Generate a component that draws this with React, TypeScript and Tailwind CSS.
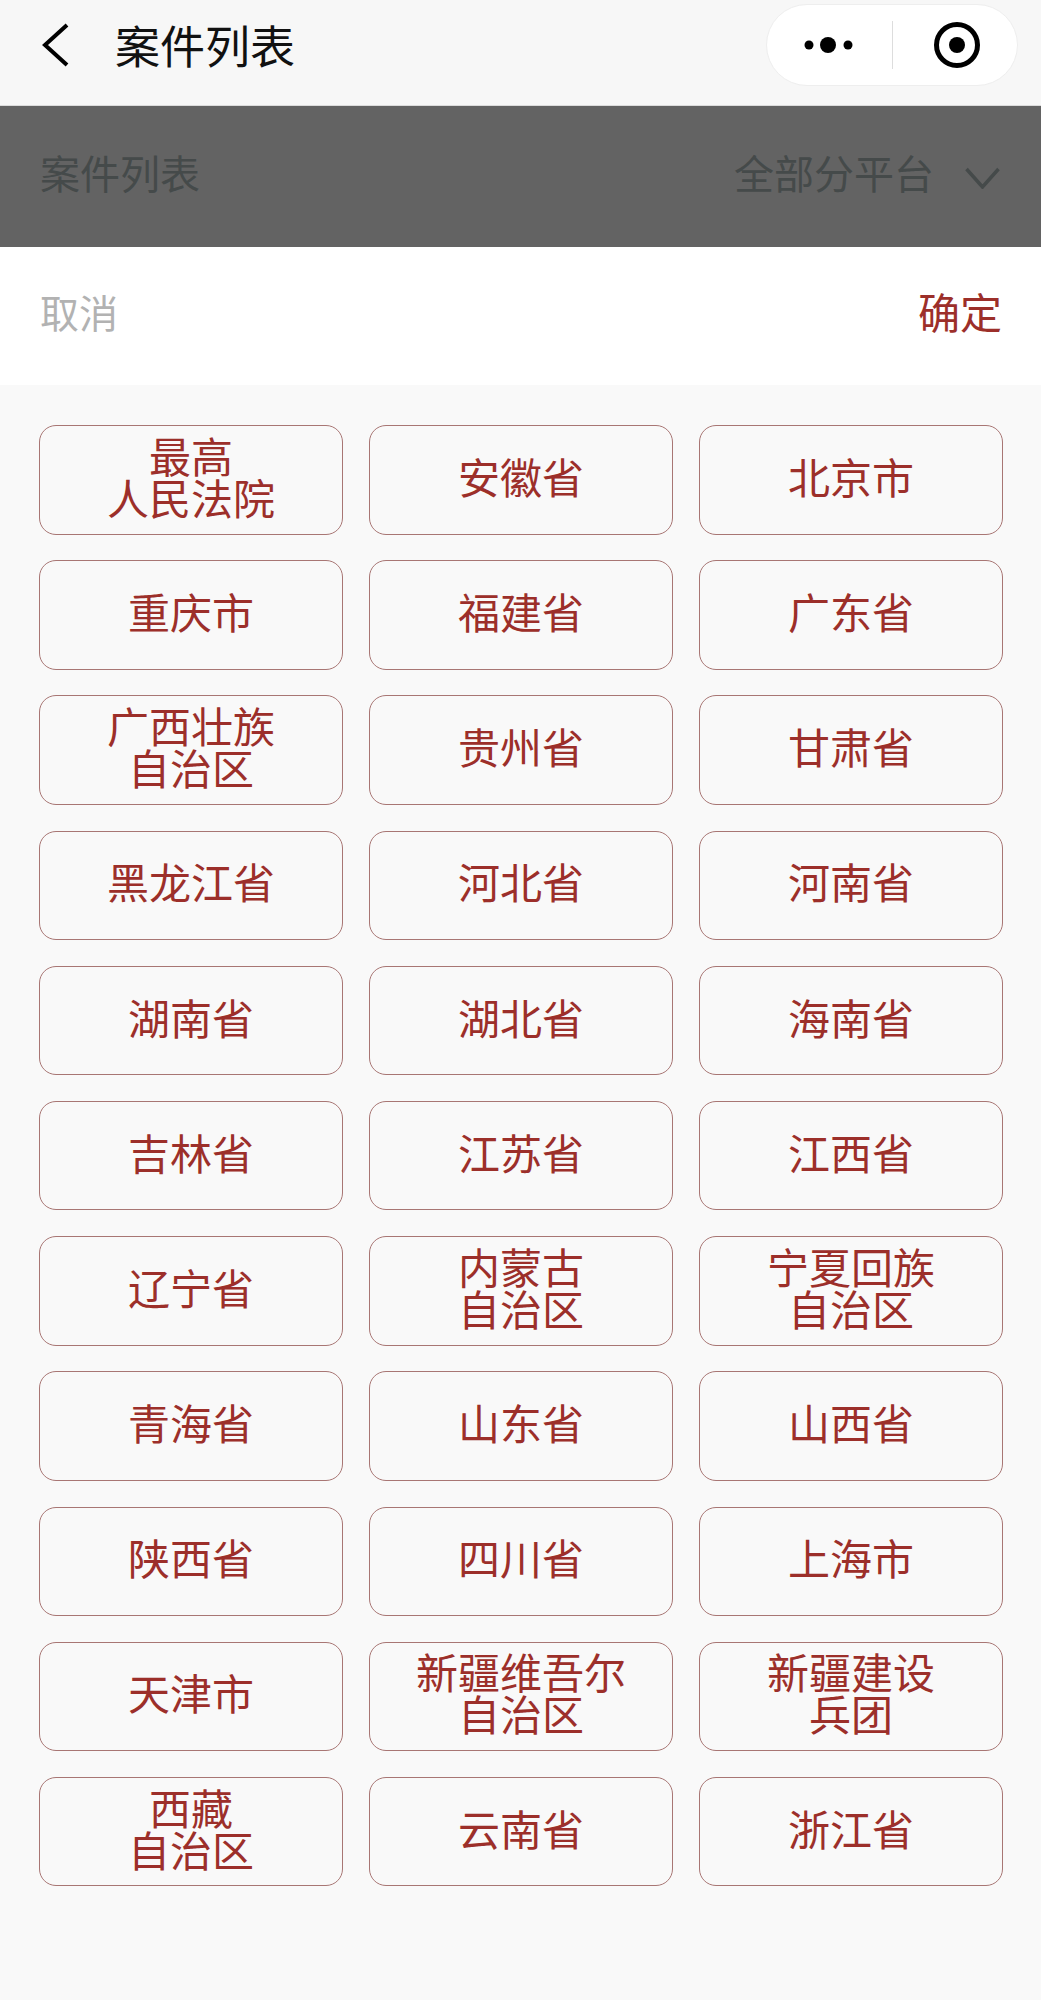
const CJK = "font-['Noto_Sans_CJK_SC','Noto_Sans',sans-serif]";

// regions in the order shown; "\n" marks the forced line break in a button
const REGIONS = [
  "最高\n人民法院", "安徽省", "北京市",
  "重庆市", "福建省", "广东省",
  "广西壮族\n自治区", "贵州省", "甘肃省",
  "黑龙江省", "河北省", "河南省",
  "湖南省", "湖北省", "海南省",
  "吉林省", "江苏省", "江西省",
  "辽宁省", "内蒙古\n自治区", "宁夏回族\n自治区",
  "青海省", "山东省", "山西省",
  "陕西省", "四川省", "上海市",
  "天津市", "新疆维吾尔\n自治区", "新疆建设\n兵团",
  "西藏\n自治区", "云南省", "浙江省",
];

function TitleBar() {
  return (
    <div className="flex h-[106px] items-start justify-between border-b border-[#dcdcdc] bg-[#f7f7f7] pl-[42px] pr-[23px] pt-1">
      <div className="flex h-[82px] items-center gap-[46px]">
        <svg width="27" height="44" viewBox="0 0 27 44" fill="none">
          <path d="M25 2 L3 22 L25 42" stroke="#000" strokeWidth="4" />
        </svg>
        <span className="pb-[2px] text-[45px] leading-none text-[#111]">案件列表</span>
      </div>
      <div className="flex h-[82px] w-[252px] items-center rounded-full border border-[#eeeeee] bg-white">
        <div className="flex w-[125px] items-center justify-end pr-[26px]">
          <svg width="62" height="18" viewBox="0 0 62 18">
            <circle cx="5" cy="9" r="4.5" fill="#000" />
            <circle cx="24" cy="9" r="8" fill="#000" />
            <circle cx="44" cy="9" r="4.5" fill="#000" />
          </svg>
        </div>
        <div className="h-12 w-px bg-[#dddddd]" />
        <div className="flex flex-1 items-center justify-center pl-1">
          <svg width="48" height="48" viewBox="0 0 48 48">
            <circle cx="24" cy="24" r="20.5" fill="none" stroke="#000" strokeWidth="5" />
            <circle cx="24" cy="24" r="8" fill="#000" />
          </svg>
        </div>
      </div>
    </div>
  );
}

function DimmedBar() {
  return (
    <div className="flex h-[141px] items-center justify-between bg-[#636363] pl-10 pr-[41px] text-[40px] leading-none text-[#454a4a]">
      <span className="pb-[10px]">案件列表</span>
      <div className="flex items-center gap-[31px]">
        <span className="pb-[10px]">全部分平台</span>
        <svg width="35" height="22" viewBox="0 0 35 22" fill="none" className="mt-[2px]">
          <path d="M1.5 2 L17.5 20 L33.5 2" stroke="#454a4a" strokeWidth="3.5" />
        </svg>
      </div>
    </div>
  );
}

function PickerActions() {
  return (
    <div className="flex h-[138px] items-center justify-between bg-white pl-10 pr-[39px]">
      <span className="pb-[10px] text-[39px] leading-none text-[#b2b2b2]">取消</span>
      <span className="pb-[10px] text-[42px] leading-none text-[#9c2f2a]">确定</span>
    </div>
  );
}

function RegionButton({ label }: { label: string }) {
  return (
    <button className="flex h-[109.5px] items-center justify-center whitespace-pre-line rounded-[17px] border border-[#a87674] pb-[8px] text-[42px] leading-[42px] text-[#9c2f2a]">
      {label}
    </button>
  );
}

export default function App() {
  return (
    <div className={`${CJK} h-[2000px] w-[1041px] overflow-hidden bg-[#f9f9f9]`}>
      <TitleBar />
      <DimmedBar />
      <PickerActions />
      <div className="grid grid-cols-3 gap-x-[26px] gap-y-[25.7px] pl-[39px] pr-[38px] pt-10">
        {REGIONS.map((r) => (
          <RegionButton key={r} label={r} />
        ))}
      </div>
    </div>
  );
}
